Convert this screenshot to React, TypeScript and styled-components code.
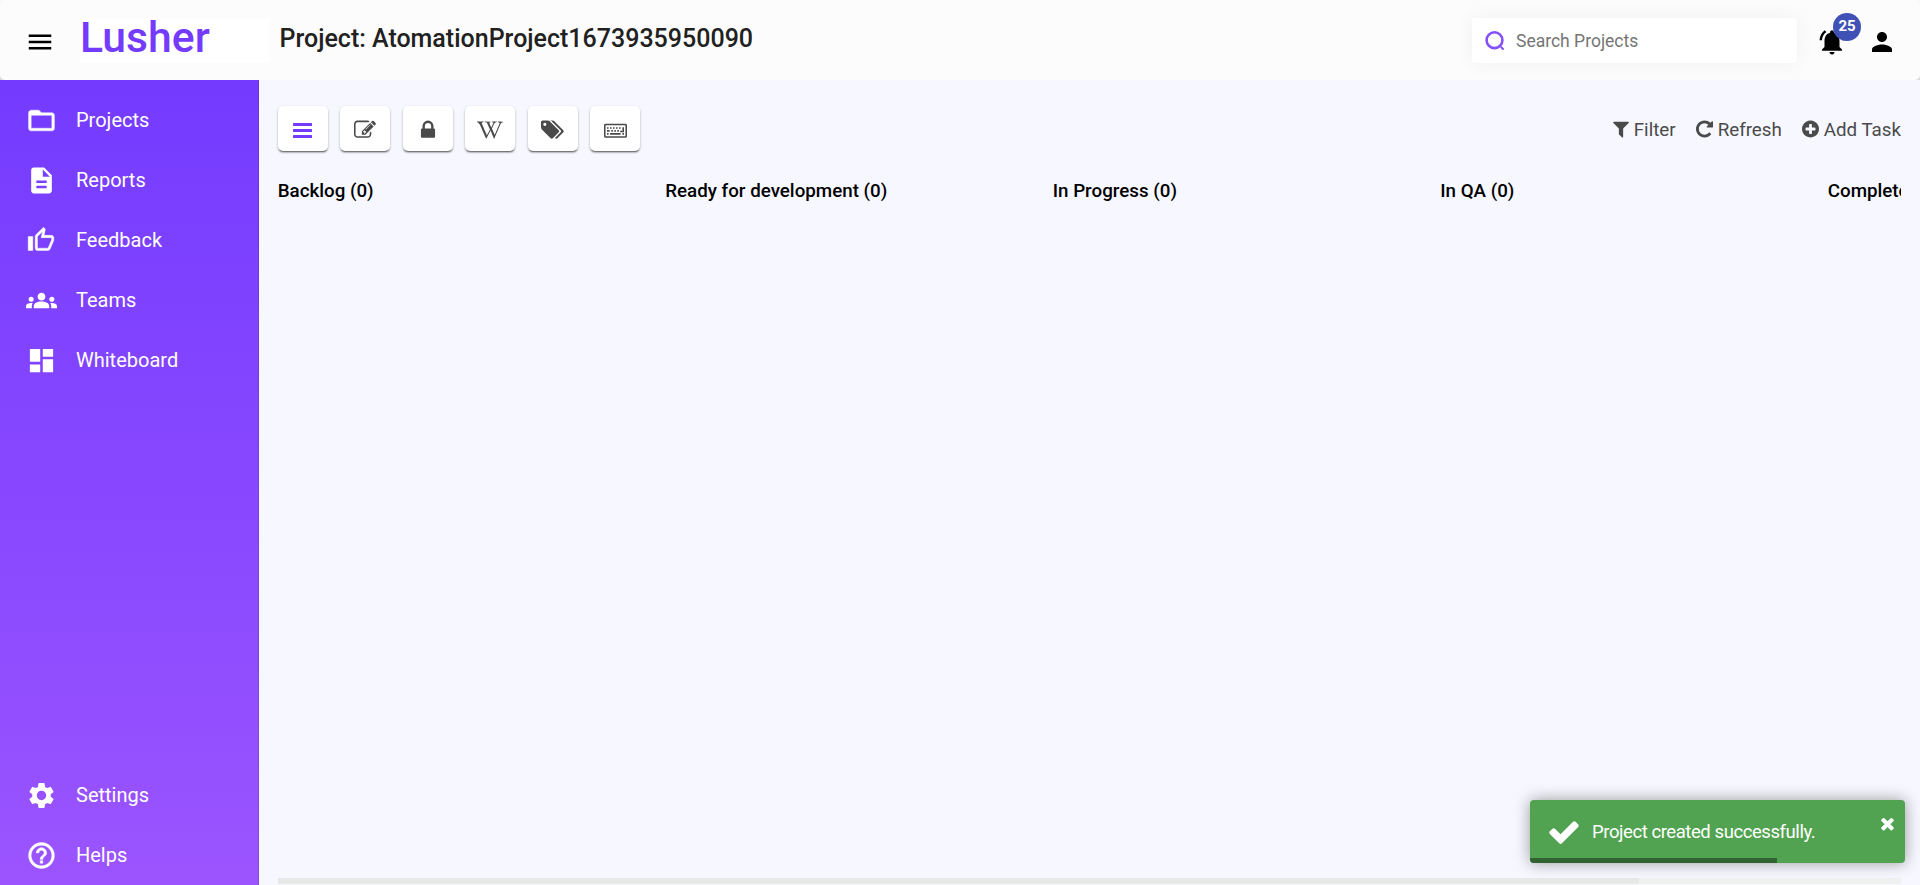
import React from 'react';
import styled, { createGlobalStyle } from 'styled-components';
import {
  MdDashboard,
  MdDescription,
  MdFolderOpen,
  MdGroups,
  MdHelpOutline,
  MdMenu,
  MdNotificationsActive,
  MdOutlineThumbUp,
  MdPerson,
  MdSettings,
} from 'react-icons/md';
import { FaWikipediaW } from 'react-icons/fa';

const GlobalStyle = createGlobalStyle`
  *, *::before, *::after { box-sizing: border-box; }
  html, body { margin: 0; padding: 0; overflow: hidden; }
  body {
    background: #f6f7ff;
    font-family: Roboto, "Liberation Sans", sans-serif;
    color: #000;
  }
`;

const Page = styled.div`
  display: flex;
  flex-direction: column;
  width: 1920px;
  height: 885px;
  overflow: hidden;
  background: #f6f7ff;
`;

const Header = styled.header`
  display: flex;
  align-items: flex-start;
  flex: none;
  height: 80px;
  padding: 18px 23px 0 25px;
  background: #fcfcfc;
  border-radius: 5px;
`;

const HeaderBacking = styled.div`
  flex: none;
  background: linear-gradient(180deg, #f6f7ff 60%, #d6d6dc);
`;

const IconButton = styled.button`
  display: flex;
  width: 30px;
  height: 30px;
  margin: 9px 0 0;
  padding: 0;
  border: 0;
  background: none;
  color: #000;
  font-size: 30px;
`;

const Logo = styled.div`
  width: 190px;
  height: 45px;
  margin-left: 25px;
  background: #fff;
  color: #743bff;
  font-size: 42.7px;
  font-weight: 500;
  line-height: 39px;
`;

const Title = styled.h1`
  flex: 1;
  margin: 5px 0 0 9.5px;
  color: #212121;
  font-size: 25px;
  font-weight: 500;
  line-height: 32px;
`;

const Search = styled.label`
  display: flex;
  align-items: center;
  width: 325px;
  height: 45px;
  padding-left: 13px;
  border-radius: 3px;
  background: #fff;
  box-shadow: 0 0 20px rgba(0, 0, 0, 0.05);
`;

const SearchInput = styled.input`
  flex: 1;
  height: 40px;
  margin-left: 11px;
  padding: 0;
  border: 0;
  outline: 0;
  background: transparent;
  font: 400 17.5px/24px Roboto, sans-serif;
  &::placeholder { color: #757575; opacity: 1; }
`;

const Alerts = styled.div`
  position: relative;
  margin: 0 20px 0 20px;
`;

const Badge = styled.span`
  position: absolute;
  top: -5px;
  left: 16px;
  width: 28px;
  height: 28px;
  border-radius: 50%;
  background: #3f51b5;
  color: #fff;
  font-size: 15px;
  font-weight: 700;
  line-height: 26px;
  text-align: center;
`;

const Body = styled.div`
  display: flex;
  flex: 1;
  min-height: 0;
`;

const Sidebar = styled.nav`
  display: flex;
  flex-direction: column;
  justify-content: space-between;
  flex: none;
  width: 259px;
  padding: 10px 0 0;
  border-right: 1px solid rgba(0, 0, 0, 0.12);
  background: linear-gradient(180deg, #743bff, #9b54ff) border-box;
`;

const MenuItem = styled.a`
  display: flex;
  align-items: center;
  height: 60px;
  padding-left: 25.5px;
  color: #fff;
  font-size: 20px;
  line-height: 30px;
`;

const MenuIcon = styled.span<{ $size?: number; $bold?: boolean }>`
  display: flex;
  align-items: center;
  justify-content: center;
  width: 31px;
  margin-right: 19.5px;
  font-size: ${(p) => p.$size ?? 31}px;

  svg {
    flex: none;
    stroke-width: ${(p) => (p.$bold ? 0.35 : 0)};
  }

  path[fill='none'] {
    display: none;
  }
`;

const Main = styled.main`
  display: flex;
  flex-direction: column;
  flex: 1;
  min-width: 0;
  padding: 26px 19px 1px 18.75px;
`;

const Toolbar = styled.div`
  display: flex;
  justify-content: space-between;
`;

const Tools = styled.div`
  display: flex;
  gap: 12.5px;
`;

const ToolButton = styled.button<{ $active?: boolean }>`
  display: flex;
  align-items: center;
  justify-content: center;
  width: 50px;
  height: 45px;
  padding: 3px 0 0;
  border: 0;
  border-radius: 5px;
  background: #fff;
  color: ${(p) => (p.$active ? '#743bff' : '#4a4a4a')};
  box-shadow: 0 1px 3px rgba(0, 0, 0, 0.2), 0 2px 2px -1px rgba(0, 0, 0, 0.6);
`;

const Actions = styled.div`
  display: flex;
  gap: 20px;
  padding-top: 9px;
`;

const Action = styled.a`
  display: flex;
  align-items: center;
  gap: 5px;
  height: 28px;
  color: #4a4a4a;
  font-size: 18.75px;
  line-height: 28px;
`;

const ActionText = styled.span`
  padding-top: 1px;
`;

const Board = styled.div`
  display: flex;
  flex: 1;
  margin-top: 27px;
  overflow: hidden;
`;

const Column = styled.section`
  flex: none;
  width: 387.5px;
`;

const ColumnTitle = styled.h2`
  margin: 0;
  font-size: 18.75px;
  font-weight: 500;
  line-height: 26px;
  white-space: nowrap;
`;

const ScrollTrack = styled.div`
  flex: none;
  height: 6px;
  background: #f0f0f0;
`;

const ScrollThumb = styled.div`
  width: 1361px;
  height: 6px;
  background: #e8e8e8;
`;

const Toast = styled.div`
  position: absolute;
  top: 800px;
  left: 1530px;
  display: flex;
  align-items: center;
  width: 375px;
  height: 63px;
  padding: 0 8px 0 17px;
  overflow: hidden;
  border-radius: 4px;
  background: #51a351;
  box-shadow: 0 0 15px #999;
  color: #fff;
  font-size: 18.5px;
`;

const ToastText = styled.span`
  flex: 1;
  margin-left: 11px;
  letter-spacing: -0.43px;
`;

const ToastClose = styled.button`
  display: flex;
  align-self: flex-start;
  margin-top: 14px;
  padding: 0;
  border: 0;
  background: none;
  color: #fff;
`;

const ToastProgress = styled.div`
  position: absolute;
  bottom: 0;
  left: 0;
  width: 247px;
  height: 5px;
  background: #316231;
`;

type GlyphProps = { d: string; w: number; h?: number; box?: string };

const Glyph = ({ d, w, h = w, box = '0 0 1792 1792' }: GlyphProps) => (
  <svg width={w} height={h} viewBox={box} fill="currentColor">
    <path d={d} />
  </svg>
);

const paths = {
  edit: 'M888 1184l116-116-152-152-116 116v56h96v96h56zm440-720q-16-16-33 1l-350 350q-17 17-1 33t33-1l350-350q17-17 1-33zm80 594v190q0 119-84.5 203.5t-203.5 84.5h-832q-119 0-203.5-84.5t-84.5-203.5v-832q0-119 84.5-203.5t203.5-84.5h832q63 0 117 25 15 7 18 23 3 17-9 29l-49 49q-14 14-32 8-23-6-45-6h-832q-66 0-113 47t-47 113v832q0 66 47 113t113 47h832q66 0 113-47t47-113v-126q0-13 9-22l64-64q15-15 35-7t20 29zm-96-738l288 288-672 672h-288v-288zm444 132l-92 92-288-288 92-92q28-28 68-28t68 28l152 152q28 28 28 68t-28 68z',
  lock: 'M640 768h512v-192q0-106-75-181t-181-75-181 75-75 181v192zm832 96v576q0 40-28 68t-68 28h-960q-40 0-68-28t-28-68v-576q0-40 28-68t68-28h32v-192q0-184 132-316t316-132 316 132 132 316v192h32q40 0 68 28t28 68z',
  tags: 'M448 448q0-53-37.5-90.5t-90.5-37.5-90.5 37.5-37.5 90.5 37.5 90.5 90.5 37.5 90.5-37.5 37.5-90.5zm1067 576q0 53-37 90l-491 492q-39 37-91 37-53 0-90-37l-715-716q-38-37-64.5-101t-26.5-117v-416q0-52 38-90t90-38h416q53 0 117 26.5t102 64.5l715 714q37 39 37 91zm384 0q0 53-37 90l-491 492q-39 37-91 37-36 0-59-14t-53-45l470-470q37-37 37-90 0-52-37-91l-715-714q-38-38-102-64.5t-117-26.5h224q53 0 117 26.5t102 64.5l715 714q37 39 37 91z',
  filter: 'M1595 295q17 41-14 70l-493 493v742q0 42-39 59-13 5-25 5-27 0-45-19l-256-256q-19-19-19-45v-486l-493-493q-31-29-14-70 17-39 59-39h1280q42 0 59 39z',
  refresh: 'M1664 256v448q0 26-19 45t-45 19h-448q-42 0-59-40-17-39 14-69l138-138q-148-137-349-137-104 0-198.5 40.5t-163.5 109.5-109.5 163.5-40.5 198.5 40.5 198.5 109.5 163.5 163.5 109.5 198.5 40.5q119 0 225-52t179-147q7-10 23-12 15 0 25 9l137 138q9 8 9.5 20.5t-7.5 22.5q-109 132-264 204.5t-327 72.5q-156 0-298-61t-245-164-164-245-61-298 61-298 164-245 245-164 298-61q147 0 284.5 55.5t244.5 156.5l130-129q29-31 70-14 39 17 39 59z',
  add: 'M1344 960v-128q0-26-19-45t-45-19h-256v-256q0-26-19-45t-45-19h-128q-26 0-45 19t-19 45v256h-256q-26 0-45 19t-19 45v128q0 26 19 45t45 19h256v256q0 26 19 45t45 19h128q26 0 45-19t19-45v-256h256q26 0 45-19t19-45zm320-64q0 209-103 385.5t-279.5 279.5-385.5 103-385.5-103-279.5-279.5-103-385.5 103-385.5 279.5-279.5 385.5-103 385.5 103 279.5 279.5 103 385.5z',
  check: 'M1671 566q0 40-28 68l-724 724-136 136q-28 28-68 28t-68-28l-136-136-362-362q-28-28-28-68t28-68l136-136q28-28 68-28t68 28l294 295 656-657q28-28 68-28t68 28l136 136q28 28 28 68z',
  close: 'M1490 1322q0 40-28 68l-136 136q-28 28-68 28t-68-28l-294-294-294 294q-28 28-68 28t-68-28l-136-136q-28-28-28-68t28-68l294-294-294-294q-28-28-28-68t28-68l136-136q28-28 68-28t68 28l294 294 294-294q28-28 68-28t68 28l136 136q28 28 28 68t-28 68l-294 294 294 294q28 28 28 68z',
};

const BarsIcon = () => (
  <svg width="19" height="15" viewBox="0 0 19 15" fill="currentColor">
    <rect width="19" height="3" rx="0.5" />
    <rect y="6" width="19" height="3" rx="0.5" />
    <rect y="12" width="19" height="3" rx="0.5" />
  </svg>
);

const KeyboardIcon = () => (
  <svg width="23" height="15" viewBox="0 0 23 15" fill="none" stroke="currentColor">
    <rect x="0.75" y="1.5" width="21.5" height="12.5" rx="1" strokeWidth="1.6" />
    <path d="M3 5h1.6M6 5h1.6M9 5h1.6M12 5h1.6M15 5h1.6M3 7.9h2.6M7.3 7.9h1.6M10.3 7.9h1.6M13.3 7.9h1.6M3 10.9h1.6M6 10.9h10.6M18.4 10.9h1.6" strokeWidth="1.7" />
    <path d="M19.2 4.2v4.3h-3" strokeWidth="1.6" />
  </svg>
);

const SearchIcon = () => (
  <svg width="20" height="20" viewBox="0 0 20 20" fill="none" stroke="#8550ff">
    <circle cx="9.5" cy="9.2" r="7.9" strokeWidth="2.6" />
    <path d="M16.3 16.3l1.7 1.7" strokeWidth="2" strokeLinecap="round" />
  </svg>
);

type MenuEntry = {
  label: string;
  Icon: React.ComponentType;
  size?: number;
  bold?: boolean;
};

const primaryMenu: MenuEntry[] = [
  { label: 'Projects', Icon: MdFolderOpen, bold: true },
  { label: 'Reports', Icon: MdDescription },
  { label: 'Feedback', Icon: MdOutlineThumbUp, size: 28, bold: true },
  { label: 'Teams', Icon: MdGroups },
  { label: 'Whiteboard', Icon: MdDashboard },
];

const secondaryMenu: MenuEntry[] = [
  { label: 'Settings', Icon: MdSettings },
  { label: 'Helps', Icon: MdHelpOutline, bold: true },
];

const columns = [
  'Backlog (0)',
  'Ready for development (0)',
  'In Progress (0)',
  'In QA (0)',
  'Completed (0)',
];

const Menu = ({ items }: { items: MenuEntry[] }) => (
  <div>
    {items.map(({ label, Icon, size, bold }) => (
      <MenuItem key={label}>
        <MenuIcon $size={size} $bold={bold}><Icon /></MenuIcon>
        {label}
      </MenuItem>
    ))}
  </div>
);

export default function App() {
  return (
    <>
      <GlobalStyle />
      <Page>
        <HeaderBacking>
          <Header>
            <IconButton aria-label="Menu"><MdMenu /></IconButton>
            <Logo>Lusher</Logo>
            <Title>Project: AtomationProject1673935950090</Title>
            <Search>
              <SearchIcon />
              <SearchInput placeholder="Search Projects" />
            </Search>
            <Alerts>
              <IconButton aria-label="Notifications"><MdNotificationsActive /></IconButton>
              <Badge>25</Badge>
            </Alerts>
            <IconButton aria-label="Account"><MdPerson /></IconButton>
          </Header>
        </HeaderBacking>
        <Body>
          <Sidebar>
            <Menu items={primaryMenu} />
            <Menu items={secondaryMenu} />
          </Sidebar>
          <Main>
            <Toolbar>
              <Tools>
                <ToolButton $active aria-label="Board"><BarsIcon /></ToolButton>
                <ToolButton aria-label="Edit"><Glyph d={paths.edit} w={22} /></ToolButton>
                <ToolButton aria-label="Lock"><Glyph d={paths.lock} w={22} /></ToolButton>
                <ToolButton aria-label="Wiki"><FaWikipediaW size={26} /></ToolButton>
                <ToolButton aria-label="Tags"><Glyph d={paths.tags} w={23} h={21.5} box="0 0 1920 1792" /></ToolButton>
                <ToolButton aria-label="Keyboard"><KeyboardIcon /></ToolButton>
              </Tools>
              <Actions>
                <Action><Glyph d={paths.filter} w={16} h={20} box="192 0 1408 1792" /><ActionText>Filter</ActionText></Action>
                <Action><Glyph d={paths.refresh} w={17} h={20} box="128 0 1536 1792" /><ActionText>Refresh</ActionText></Action>
                <Action><Glyph d={paths.add} w={17} h={20} box="128 0 1536 1792" /><ActionText>Add Task</ActionText></Action>
              </Actions>
            </Toolbar>
            <Board>
              {columns.map((name) => (
                <Column key={name}>
                  <ColumnTitle>{name}</ColumnTitle>
                </Column>
              ))}
            </Board>
            <ScrollTrack><ScrollThumb /></ScrollTrack>
          </Main>
        </Body>
      </Page>
      <Toast>
        <Glyph d={paths.check} w={34} />
        <ToastText>Project created successfully.</ToastText>
        <ToastClose aria-label="Close"><Glyph d={paths.close} w={19} /></ToastClose>
        <ToastProgress />
      </Toast>
    </>
  );
}
